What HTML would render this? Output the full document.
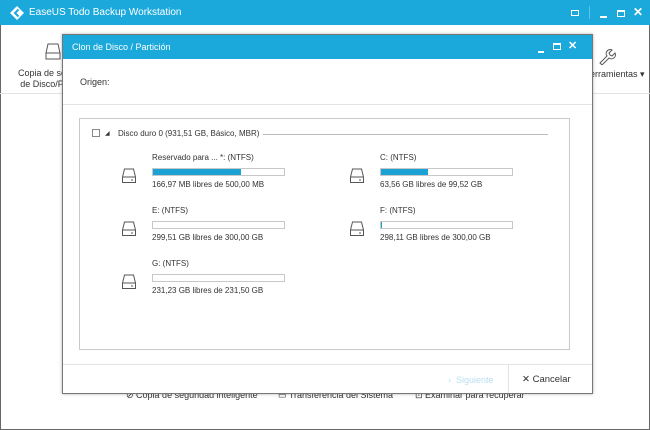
<!DOCTYPE html>
<html><head><meta charset="utf-8"><style>
*{margin:0;padding:0;box-sizing:border-box}
body{width:650px;height:430px;overflow:hidden;background:#fff;font-family:"Liberation Sans",sans-serif;font-size:9px;color:#333;position:relative}
.a{position:absolute}
.bar{position:absolute;height:8px;border:1px solid #c8c8c8;background:#fff;width:133px}
.bar i{display:block;height:100%;background:#1ba1d4}
.lbl{position:absolute;font-size:8px;color:#333;white-space:nowrap}
</style></head><body>
<div class="a" style="left:0;top:0;width:650px;height:430px;border:1px solid #666;border-top:none"></div>
<div class="a" style="left:0;top:0;width:650px;height:25px;background:#1ba9dc"></div>
<svg class="a" style="left:10px;top:6px" width="14" height="14" viewBox="0 0 14 14"><path d="M7 0L14 7L7 14L0 7Z" fill="#fff"/><path d="M8.5 3.5L5 7L8.5 10.5" stroke="#1ba9dc" stroke-width="2" fill="none"/></svg>
<div class="a" style="left:29px;top:7px;color:#fff;font-size:10px">EaseUS Todo Backup Workstation</div>
<div class="a" style="left:571px;top:10px;width:8px;height:6px;border:1.5px solid #fff"></div>
<div class="a" style="left:589px;top:6px;width:1px;height:13px;background:#5cc3e8"></div>
<div class="a" style="left:600px;top:16px;width:7px;height:2px;background:#fff"></div>
<div class="a" style="left:617px;top:10px;width:8px;height:7px;border:1.5px solid #fff;border-top-width:2.5px"></div>
<div class="a" style="left:633px;top:5px;color:#fff;font-size:12px;font-weight:bold">✕</div>
<svg class="a" style="left:45px;top:43px" width="16" height="18" viewBox="0 0 16 18"><path d="M3 1h10l2 9v6H1v-6z M1 10h14" stroke="#555" fill="none"/></svg>
<div class="a" style="left:18px;top:68px;font-size:9px;line-height:11px;text-align:center;color:#333">Copia de se<br>de Disco/P</div>
<svg class="a" style="left:598px;top:47px" width="18" height="18" viewBox="0 0 18 18"><path d="M2 16l7-7a4 4 0 0 1 5-6l-3 3 1 2 2 1 3-3a4 4 0 0 1-6 5l-7 7z" stroke="#555" fill="none"/></svg>
<div class="a" style="left:590px;top:69px;font-size:9px">erramientas ▾</div>
<div class="a" style="left:0;top:93px;width:650px;height:1px;background:#e3e3e3"></div>
<div class="a" style="left:126px;top:390px;font-size:9px;color:#333">⊘ Copia de seguridad inteligente</div>
<div class="a" style="left:278px;top:390px;font-size:9px;color:#333">▭ Transferencia del Sistema</div>
<div class="a" style="left:415px;top:390px;font-size:9px;color:#333">⊡ Examinar para recuperar</div>

<div class="a" style="left:62px;top:34px;width:531px;height:360px;background:#fff;border:1px solid #777;box-shadow:0 0 3px rgba(0,0,0,.3)"></div>
<div class="a" style="left:63px;top:35px;width:529px;height:24px;background:#1ba9dc"></div>
<div class="a" style="left:72px;top:42px;color:#fff;font-size:9px">Clon de Disco / Partición</div>
<div class="a" style="left:538px;top:51px;width:6px;height:2px;background:#fff"></div>
<div class="a" style="left:553px;top:43px;width:8px;height:7px;border:1.5px solid #fff;border-top-width:2.5px"></div>
<div class="a" style="left:568px;top:39px;color:#fff;font-size:11px;font-weight:bold">✕</div>
<div class="a" style="left:80px;top:77px;font-size:9px">Origen:</div>
<div class="a" style="left:63px;top:104px;width:529px;height:1px;background:#e3e3e3"></div>
<div class="a" style="left:79px;top:118px;width:491px;height:232px;border:1px solid #c9c9c9"></div>
<div class="a" style="left:92px;top:129px;width:8px;height:8px;border:1px solid #888"></div>
<div class="a" style="left:105px;top:130px;font-size:6px">◢</div>
<div class="lbl" style="left:118px;top:129px">Disco duro 0 (931,51 GB, Básico, MBR)</div>
<div class="a" style="left:263px;top:134px;width:285px;height:1px;background:#bbb"></div>

<svg class="a" style="left:122px;top:168px" width="14" height="16" viewBox="0 0 14 16"><path d="M2.5 1h9l2 8v5.5H.5V9z M.5 9h13 M9 12h2" stroke="#555" fill="none"/></svg>
<div class="lbl" style="left:152px;top:153px">Reservado para ... *: (NTFS)</div>
<div class="bar" style="left:152px;top:168px"><i style="width:67%"></i></div>
<div class="lbl" style="left:152px;top:180px">166,97 MB libres de 500,00 MB</div>

<svg class="a" style="left:350px;top:168px" width="14" height="16" viewBox="0 0 14 16"><path d="M2.5 1h9l2 8v5.5H.5V9z M.5 9h13 M9 12h2" stroke="#555" fill="none"/></svg>
<div class="lbl" style="left:380px;top:153px">C: (NTFS)</div>
<div class="bar" style="left:380px;top:168px"><i style="width:36%"></i></div>
<div class="lbl" style="left:380px;top:180px">63,56 GB libres de 99,52 GB</div>

<svg class="a" style="left:122px;top:221px" width="14" height="16" viewBox="0 0 14 16"><path d="M2.5 1h9l2 8v5.5H.5V9z M.5 9h13 M9 12h2" stroke="#555" fill="none"/></svg>
<div class="lbl" style="left:152px;top:206px">E: (NTFS)</div>
<div class="bar" style="left:152px;top:221px"></div>
<div class="lbl" style="left:152px;top:233px">299,51 GB libres de 300,00 GB</div>

<svg class="a" style="left:350px;top:221px" width="14" height="16" viewBox="0 0 14 16"><path d="M2.5 1h9l2 8v5.5H.5V9z M.5 9h13 M9 12h2" stroke="#555" fill="none"/></svg>
<div class="lbl" style="left:380px;top:206px">F: (NTFS)</div>
<div class="bar" style="left:380px;top:221px"><i style="width:1%"></i></div>
<div class="lbl" style="left:380px;top:233px">298,11 GB libres de 300,00 GB</div>

<svg class="a" style="left:122px;top:274px" width="14" height="16" viewBox="0 0 14 16"><path d="M2.5 1h9l2 8v5.5H.5V9z M.5 9h13 M9 12h2" stroke="#555" fill="none"/></svg>
<div class="lbl" style="left:152px;top:259px">G: (NTFS)</div>
<div class="bar" style="left:152px;top:274px"></div>
<div class="lbl" style="left:152px;top:286px">231,23 GB libres de 231,50 GB</div>

<div class="a" style="left:63px;top:364px;width:529px;height:1px;background:#e3e3e3"></div>
<div class="a" style="left:508px;top:365px;width:1px;height:28px;background:#e3e3e3"></div>
<div class="a" style="left:448px;top:375px;font-size:9px;color:#b9dff0">›&nbsp; Siguiente</div>
<div class="a" style="left:522px;top:374px;font-size:9.5px;color:#333">✕ Cancelar</div>
</body></html>
